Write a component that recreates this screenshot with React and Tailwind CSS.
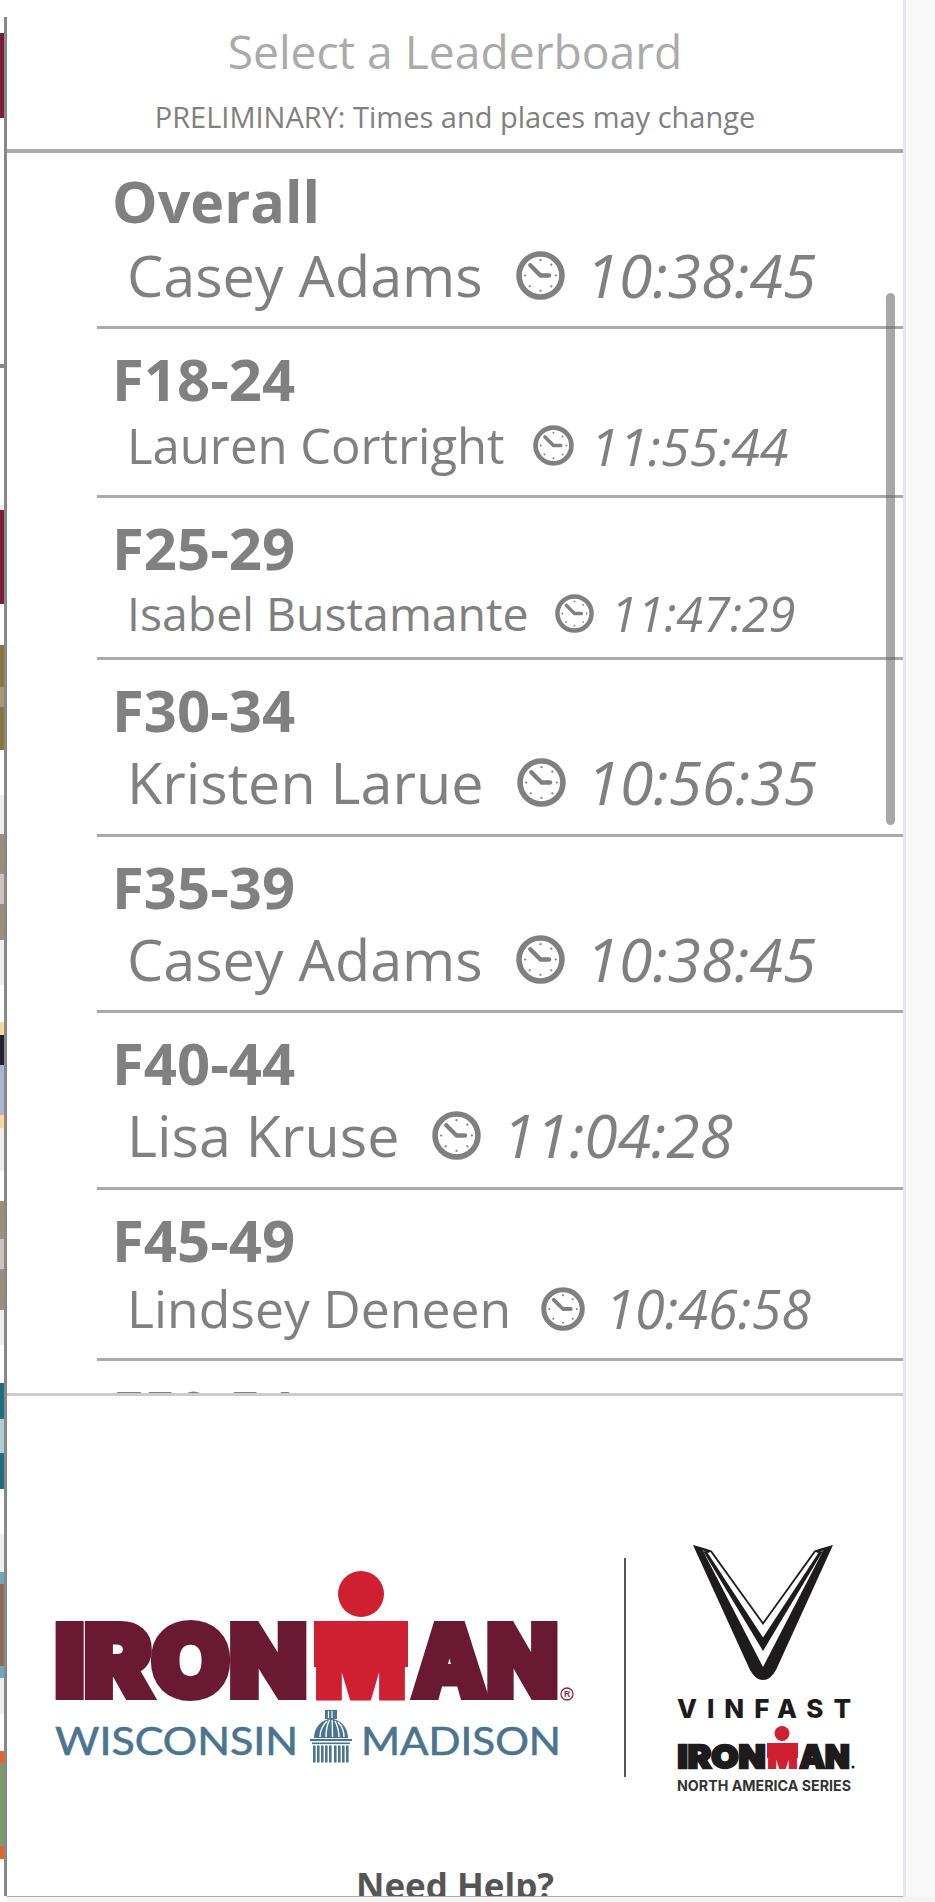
const font = "font-['Open_Sans',sans-serif]";

const strip = [
  ['h-[33px]', 'bg-white'], ['h-[85px]', 'bg-[#7a1f3a]'], ['h-[246px]', 'bg-white'], ['h-[4px]', 'bg-[#888888]'],
  ['h-[137px]', 'bg-white'], ['h-[5px]', 'bg-[#eeeeec]'], ['h-[94px]', 'bg-[#7a1f3a]'], ['h-[41px]', 'bg-white'],
  ['h-[42px]', 'bg-[#8a7440]'], ['h-[20px]', 'bg-[#a89a78]'], ['h-[43px]', 'bg-[#8a7440]'], ['h-[45px]', 'bg-white'],
  ['h-[39px]', 'bg-[#eeeeec]'], ['h-[40px]', 'bg-[#9b8f80]'], ['h-[30px]', 'bg-[#c9c5bf]'], ['h-[36px]', 'bg-[#9b8f80]'],
  ['h-[45px]', 'bg-[#eeeeec]'], ['h-[37px]', 'bg-white'], ['h-[13px]', 'bg-[#f8d79c]'], ['h-[30px]', 'bg-[#22222e]'], ['h-[50px]', 'bg-[#a9b4d0]'], ['h-[13px]', 'bg-[#f8d79c]'],
  ['h-[43px]', 'bg-[#eeeeec]'], ['h-[30px]', 'bg-white'], ['h-[38px]', 'bg-[#9b8f80]'], ['h-[30px]', 'bg-[#c9c5bf]'], ['h-[41px]', 'bg-[#9b8f80]'],
  ['h-[35px]', 'bg-[#eeeeec]'], ['h-[38px]', 'bg-white'], ['h-[36px]', 'bg-[#1f6f80]'], ['h-[34px]', 'bg-[#b5ccd0]'], ['h-[36px]', 'bg-[#1f6f80]'],
  ['h-[45px]', 'bg-white'], ['h-[38px]', 'bg-[#eeeeec]'], ['h-[12px]', 'bg-[#6ea9b8]'], ['h-[82px]', 'bg-[#8a6a5c]'], ['h-[12px]', 'bg-[#6ea9b8]'],
  ['h-[36px]', 'bg-[#eeeeec]'], ['h-[37px]', 'bg-white'], ['h-[12px]', 'bg-[#e8622c]'], ['h-[84px]', 'bg-[#7d9a6a]'], ['h-[12px]', 'bg-[#e8622c]'], ['h-[43px]', 'bg-white'],
];

const big = { f: 'text-[57.5px]', tf: 'text-[60.5px]', l: 'leading-[80px]', i: 'w-[49px] h-[49px]', g1: 'ml-[33px]', g2: 'ml-[21px]', p: 'pt-[18px]', ts: 'text-[58px]' };
const rows = [
  { ...big, t: 'Overall', n: 'Casey Adams', c: '10:38:45', h: 'h-[176px]', p: 'pt-[16px]', l: 'leading-[84px]', ts: 'text-[57.4px]' },
  { t: 'F18-24', n: 'Lauren Cortright', c: '11:55:44', h: 'h-[169px]', f: 'text-[49px]', tf: 'text-[52px]', l: 'leading-[69px]', i: 'w-[41px] h-[41px]', g1: 'ml-[28px]', g2: 'ml-[17px]', p: 'pt-[18px]', ts: 'text-[58px]' },
  { t: 'F25-29', n: 'Isabel Bustamante', c: '11:47:29', h: 'h-[162px]', f: 'text-[46.4px]', tf: 'text-[48.6px]', l: 'leading-[66px]', i: 'w-[39px] h-[39px]', g1: 'ml-[26px]', g2: 'ml-[17px]', p: 'pt-[18px]', ts: 'text-[58px]' },
  { ...big, t: 'F30-34', n: 'Kristen Larue', c: '10:56:35', h: 'h-[177px]' },
  { ...big, t: 'F35-39', n: 'Casey Adams', c: '10:38:45', h: 'h-[176px]' },
  { ...big, t: 'F40-44', n: 'Lisa Kruse', c: '11:04:28', h: 'h-[177px]' },
  { t: 'F45-49', n: 'Lindsey Deneen', c: '10:46:58', h: 'h-[171px]', f: 'text-[51.7px]', tf: 'text-[54px]', l: 'leading-[73px]', i: 'w-[44px] h-[44px]', g1: 'ml-[30px]', g2: 'ml-[20px]', p: 'pt-[18px]', ts: 'text-[58px]' },
];

function Clock({ className }) {
  const dots = [0, 45, 90, 135, 180, 225, 270, 315];
  return (
    <svg viewBox="0 0 48 48" className={className + ' shrink-0'}>
      <circle cx="24" cy="24" r="21" fill="none" stroke="#808080" strokeWidth="5.5" />
      {dots.map((a) => (
        <circle key={a} cx={24 + 15 * Math.sin((a * Math.PI) / 180)} cy={24 - 15 * Math.cos((a * Math.PI) / 180)} r="1.1" fill="#808080" />
      ))}
      <path d="M14 14 L24 24 L32.5 24" fill="none" stroke="#808080" strokeWidth="4.2" strokeLinecap="round" strokeLinejoin="round" />
    </svg>
  );
}

function Row({ r }) {
  return (
    <div className={`${r.h} ${r.p} shrink-0 ml-[90px] pl-[15px] border-b-[3px] border-[#aaaaaa] overflow-hidden`}>
      <div className={`${r.ts} leading-[64px] font-bold text-[#808080] whitespace-nowrap`}>{r.t}</div>
      <div className={`flex items-center pl-[15px] ${r.f} ${r.l} text-[#808080] whitespace-nowrap`}>
        <span>{r.n}</span>
        <span className={`${r.g1} flex items-center`}><Clock className={r.i} /></span>
        <span className={`${r.g2} ${r.tf} italic`}>{r.c}</span>
      </div>
    </div>
  );
}

function Dome({ color }) {
  const cols = [313, 317, 321, 325, 329, 334, 338, 342, 346];
  return (
    <g fill={color}>
      <rect x="325" y="1710" width="12" height="9" />
      <path d="M314 1738 C314 1727 322 1719 331 1719 C340 1719 348 1727 348 1738 Z" />
      <path d="M320 1737 C320 1730 323 1725 327 1721 M326 1737 C326 1730 327 1725 329.5 1720 M332.5 1737 C332.5 1730 332.5 1725 332 1720 M339 1737 C339 1730 337 1725 335 1721 M344 1737 C344 1730 341 1725 338 1722" fill="none" stroke="#ffffff" strokeWidth="1.4" />
      <path d="M328.5 1711 V1718 M332 1711 V1718" stroke="#ffffff" strokeWidth="1.2" />
      <rect x="310" y="1739" width="42" height="2" />
      <rect x="312" y="1742.5" width="38" height="1.6" />
      {cols.map((x) => <rect key={x} x={x} y="1745.5" width="2.6" height="17" />)}
    </g>
  );
}

function MainLogo() {
  const blk = { fontFamily: 'Inter, sans-serif', fontWeight: 900 };
  return (
    <svg viewBox="50 1565 530 205" className="w-[530px] h-[205px] shrink-0">
      <g fill="#691a32" stroke="#691a32" strokeWidth="8" style={blk}>
        <text x="55" y="1696" fontSize="98" textLength="252" lengthAdjust="spacingAndGlyphs">IRON</text>
        <text x="413" y="1696" fontSize="98" textLength="145" lengthAdjust="spacingAndGlyphs">AN</text>
      </g>
      <text x="315" y="1696.5" fontSize="98" fill="#cf2031" stroke="#cf2031" strokeWidth="7" textLength="91" lengthAdjust="spacingAndGlyphs" style={blk}>M</text>
      <rect x="314" y="1621" width="94" height="46" fill="#cf2031" />
      <ellipse cx="361" cy="1594" rx="23" ry="23" fill="#cf2031" />
      <circle cx="567" cy="1694" r="6" fill="none" stroke="#8a2a42" strokeWidth="1.3" />
      <text x="567" y="1697" fontSize="8.5" textAnchor="middle" fill="#8a2a42" fontFamily="Liberation Sans" fontWeight="700">R</text>
      <g fontSize="39" fill="#4a7490" stroke="#4a7490" strokeWidth="0.6" fontFamily="Lato, sans-serif">
        <text x="55" y="1755" textLength="243" lengthAdjust="spacingAndGlyphs">WISCONSIN</text>
        <text x="361" y="1755" textLength="200" lengthAdjust="spacingAndGlyphs">MADISON</text>
      </g>
      <Dome color="#4a7490" />
    </svg>
  );
}

function VHalf() {
  return (
    <g fill="#1d1b1b">
      <path d="M693 1545 L702 1549 L763 1667 L763 1680 C757 1680 753 1675 750 1670 Z" />
      <path d="M703 1551 L763 1651 V1637.5 L707 1552 Z" />
      <path d="M709 1550 L763 1625 V1622 L712 1551 Z" />
      <path d="M693 1545 C700 1547 708 1549 712 1551 L708 1553 C703 1550 698 1549 693 1545 Z" />
    </g>
  );
}

function SeriesLogo() {
  const blk = { fontFamily: 'Inter, sans-serif', fontWeight: 900 };
  return (
    <svg viewBox="670 1540 190 255" className="w-[190px] h-[255px] shrink-0">
      <VHalf />
      <g transform="matrix(-1 0 0 1 1526 0)"><VHalf /></g>
      <text x="677" y="1718" fontSize="26" fontWeight="800" fill="#1d1b1b" fontFamily="Inter, sans-serif" textLength="174">VINFAST</text>
      <g fill="#1d1b1b" stroke="#1d1b1b" strokeWidth="2.4" style={blk}>
        <text x="677.5" y="1767.7" fontSize="32" textLength="88" lengthAdjust="spacingAndGlyphs">IRON</text>
        <text x="799.5" y="1767.7" fontSize="32" textLength="50" lengthAdjust="spacingAndGlyphs">AN</text>
      </g>
      <text x="767.5" y="1767.7" fontSize="32" fill="#cf2031" stroke="#cf2031" strokeWidth="2" textLength="30" lengthAdjust="spacingAndGlyphs" style={blk}>M</text>
      <rect x="767" y="1743" width="31" height="15" fill="#cf2031" />
      <circle cx="782" cy="1733.5" r="7.5" fill="#cf2031" />
      <circle cx="853" cy="1767" r="1.5" fill="#1d1b1b" />
      <text x="677" y="1791" fontSize="15" fontWeight="700" fill="#333333" fontFamily="Inter, sans-serif" textLength="174" lengthAdjust="spacingAndGlyphs">NORTH AMERICA SERIES</text>
    </svg>
  );
}

export default function App() {
  return (
    <div className={`${font} flex w-[935px] h-[1902px] overflow-hidden bg-[#f3f3f3]`}>
      <div className="w-[4px] flex flex-col shrink-0">
        {strip.map(([h, c], i) => <div key={i} className={`${h} ${c} shrink-0`} />)}
      </div>
      <div className="w-[3px] shrink-0 bg-white">
        <div className="mt-[17px] h-[1879px] bg-[#888888]" />
      </div>
      <div className="relative w-[896px] shrink-0 h-[1897px] bg-white border-b border-[#aaaaaa] flex flex-col overflow-hidden">
        <div className="h-[153px] shrink-0 border-b-4 border-[#aaaaaa] flex flex-col items-center">
          <div className="mt-[21px] text-[46.2px] leading-[62px] text-[#aaaaaa] whitespace-nowrap">Select a Leaderboard</div>
          <div className="mt-[15px] text-[29px] leading-[38px] text-[#808080] whitespace-nowrap">PRELIMINARY: Times and places may change</div>
        </div>
        <div className="relative h-[1240px] shrink-0 overflow-hidden flex flex-col">
          {rows.map((r) => <Row key={r.t} r={r} />)}
          <div className="shrink-0 ml-[90px] pl-[15px] pt-[18px] text-[58px] leading-[64px] font-bold text-[#808080] whitespace-nowrap">F50-54</div>
          <div className="absolute left-[879px] top-[140px] w-[9px] h-[532px] rounded-full bg-[#606060]/55" />
        </div>
        <div className="h-[471px] shrink-0 border-t-[3px] border-[#cccccc] flex items-start">
          <div className="ml-[43px] mt-[169px]"><MainLogo /></div>
          <div className="ml-[44px] mt-[162px] w-[2px] h-[219px] bg-[#555555] shrink-0" />
          <div className="ml-[44px] mt-[144px]"><SeriesLogo /></div>
        </div>
        <div className="text-center text-[35px] leading-[44px] font-bold text-[#555555] whitespace-nowrap">Need Help?</div>
      </div>
      <div className="w-[3px] h-[1897px] shrink-0 bg-[#e3e7ec]" />
      <div className="flex-1 h-[1897px] bg-[#f8f8f9]" />
    </div>
  );
}
